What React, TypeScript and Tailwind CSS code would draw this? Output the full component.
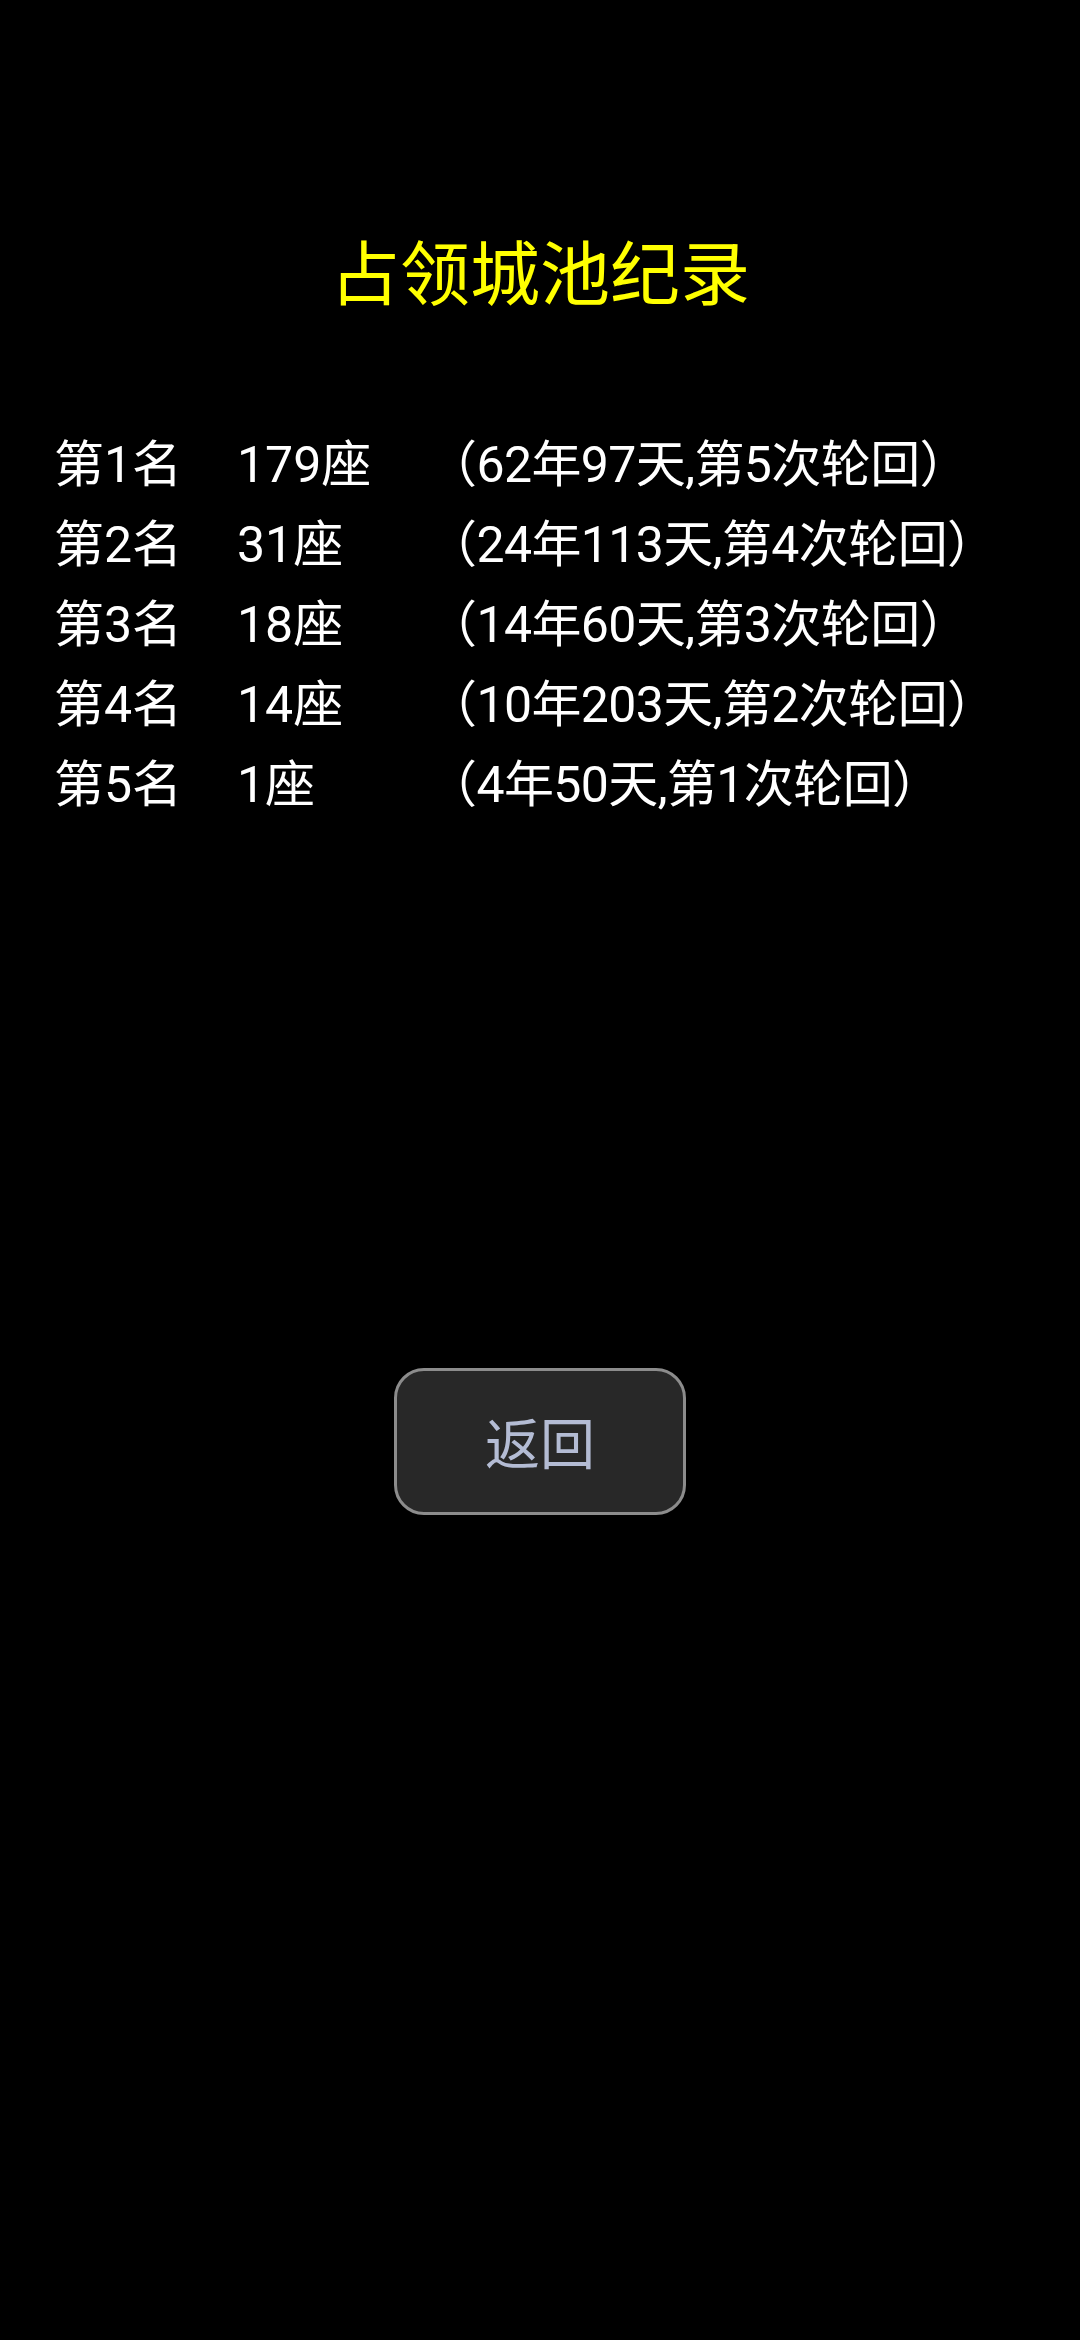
import React from "react";

const rows = [
  { rank: "第1名", count: "179座", info: "（62年97天,第5次轮回）" },
  { rank: "第2名", count: "31座", info: "（24年113天,第4次轮回）" },
  { rank: "第3名", count: "18座", info: "（14年60天,第3次轮回）" },
  { rank: "第4名", count: "14座", info: "（10年203天,第2次轮回）" },
  { rank: "第5名", count: "1座", info: "（4年50天,第1次轮回）" },
];

export default function App() {
  return (
    <div
      className="w-[1080px] h-[2340px] bg-black flex flex-col"
      style={{ fontFamily: 'Roboto, "Noto Sans CJK SC", sans-serif' }}
    >
      <div className="mt-[240px] h-[72px] text-center text-[70px] leading-[72px] text-[#ffff00]">
        占领城池纪录
      </div>
      <div className="mt-[113px] flex flex-col pl-[54px]">
        {rows.map((r) => (
          <div key={r.rank} className="flex h-[80px] items-center text-[50px] leading-[80px] text-white">
            <span className="w-[183px] shrink-0">{r.rank}</span>
            <span className="w-[190px] shrink-0">{r.count}</span>
            <span className="whitespace-nowrap tracking-[-0.6px]">{r.info}</span>
          </div>
        ))}
      </div>
      <div className="mt-[543px] flex justify-center">
        <button className="w-[292px] h-[147px] rounded-[30px] border-[3px] border-[#8c8c8c] bg-[#282828] text-[55px] text-[#b4bcd4] flex items-center justify-center pt-[8px]">
          返回
        </button>
      </div>
    </div>
  );
}
